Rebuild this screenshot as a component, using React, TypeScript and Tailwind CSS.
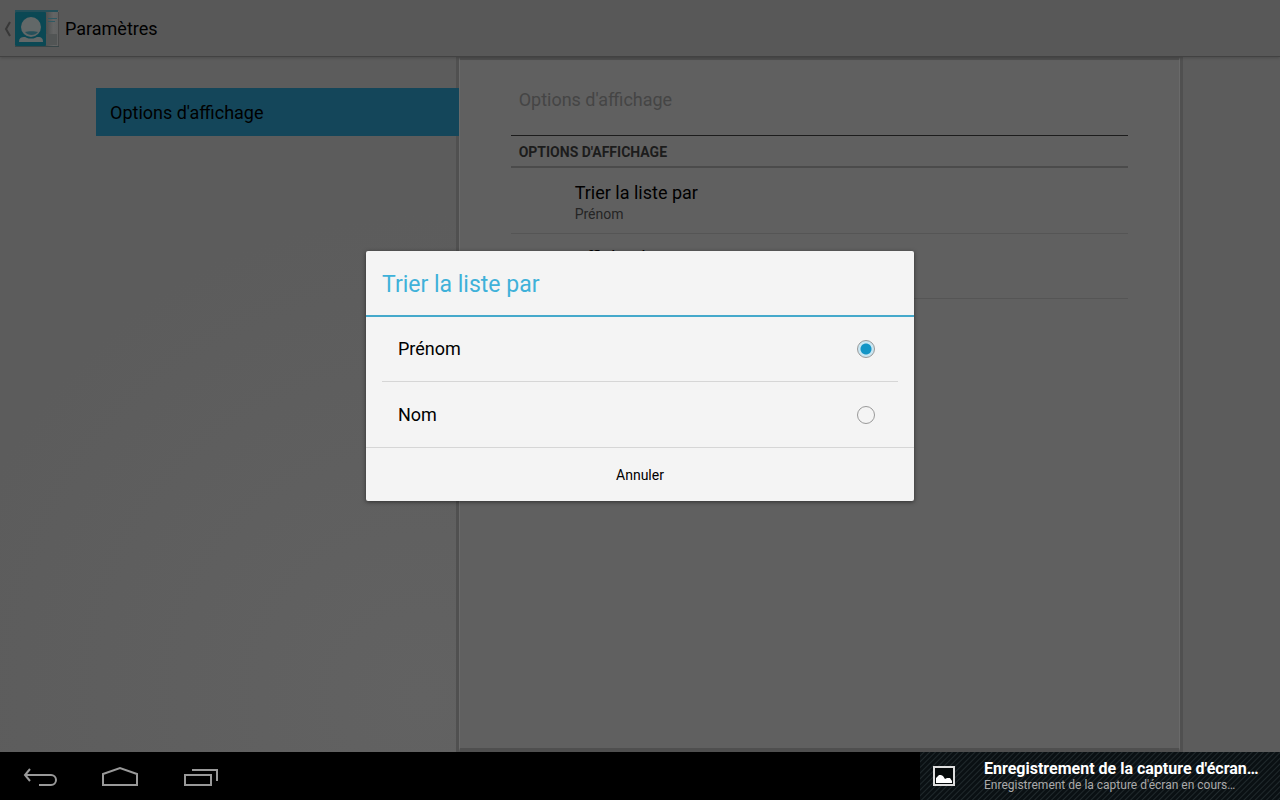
import React, { useState } from "react";

const preferences = [
  { title: "Trier la liste par", summary: "Prénom" },
  { title: "Afficher les contacts", summary: "Prénom en premier" },
];

const sortChoices = ["Prénom", "Nom"];

function ContactsIcon() {
  return (
    <svg className="h-10 w-11 shrink-0" viewBox="0 0 44 40" aria-hidden="true">
      <defs>
        <linearGradient id="page" x1="0" x2="1" y1="0" y2="0">
          <stop offset="0" stopColor="#484c4c" />
          <stop offset="0.6" stopColor="#646565" />
          <stop offset="1" stopColor="#606161" />
        </linearGradient>
      </defs>
      <rect x="30" y="2" width="14" height="36" fill="url(#page)" />
      <rect x="0" y="1" width="43" height="2" fill="#244f59" />
      <rect x="33" y="9" width="9" height="1" fill="#2f5963" />
      <rect x="33" y="12" width="7" height="1" fill="#2f5963" />
      <rect x="31" y="25" width="11" height="11" fill="#525555" />
      <rect x="43" y="3" width="1" height="34" fill="#4a4b4b" />
      <rect x="0" y="3" width="31" height="34" rx="1" fill="#0b4854" />
      <rect x="0" y="37" width="44" height="1" fill="#384547" />
      <path d="M4 33c0-4 2-5 6-5h13c4 0 5 2 5 5z" fill="#626868" />
      <circle cx="16" cy="18" r="11.5" fill="#0b4854" />
      <circle cx="16" cy="18" r="10" fill="#626868" />
      <path d="M10 23c3-1 10-1 13 0-3 4-10 4-13 0z" fill="#26505a" />
    </svg>
  );
}

function Header() {
  return (
    <header className="z-10 flex h-[57px] shrink-0 items-center border-b border-[#424242] bg-[#585858] pt-[2px] shadow-[0_1px_3px_#00000030]">
      <button className="flex items-center gap-1 pl-1" aria-label="Retour">
        <svg className="h-4 w-[7px]" viewBox="0 0 7 16" fill="none" stroke="#383838" strokeWidth="2" aria-hidden="true">
          <path d="M6 1L2 8l4 7" />
        </svg>
        <ContactsIcon />
      </button>
      <h1 className="pl-[6px] text-lg text-black">Paramètres</h1>
    </header>
  );
}

function SettingsPanel() {
  return (
    <section className="mr-1 border-x border-t-[3px] border-b-4 border-x-[#6a6a6a] border-y-[#4f4f4f] bg-[#606060] px-[51px] shadow-[3px_0_0_#505050,-3px_0_0_#505050]">
      <h2 className="flex h-[76px] items-center border-b border-[#1c1c1c] px-2 pt-1 text-lg text-[#454545]">
        Options d'affichage
      </h2>
      <h3 className="flex h-8 items-center border-b-2 border-[#4b4b4b] px-2 pt-[2px] text-sm font-bold text-[#1c1c1c]">
        OPTIONS D'AFFICHAGE
      </h3>
      <ul className="pt-px">
        {preferences.map((item) => (
          <li key={item.title} className="h-[65px] border-b border-[#555]">
            <button className="flex h-full w-full flex-col justify-center pt-[2px] pl-16 text-left">
              <span className="text-lg leading-6 text-black">{item.title}</span>
              <span className="text-sm leading-[18px] text-[#252525]">{item.summary}</span>
            </button>
          </li>
        ))}
      </ul>
    </section>
  );
}

function SortDialog() {
  const [selected, setSelected] = useState("Prénom");

  return (
    <div className="absolute inset-0 z-20 flex items-center justify-center px-4">
      <div
        role="dialog"
        aria-labelledby="dialog-title"
        className="w-full max-w-[548px] rounded-xs bg-[#f4f4f4] shadow-[0_1px_4px_#00000080]"
      >
        <h2 id="dialog-title" className="flex h-[66px] items-center border-b-2 border-[#45a9cb] px-4 pt-1 text-[23px] text-[#3fb1d9]">
          Trier la liste par
        </h2>
        <div className="divide-y divide-[#d6d6d6] px-4">
          {sortChoices.map((choice) => (
            <label key={choice} className="flex h-[65px] items-center justify-between pr-[23px] pl-4 text-lg text-black">
              {choice}
              <input
                type="radio"
                name="sort"
                checked={selected === choice}
                onChange={() => setSelected(choice)}
                className="size-[18px] appearance-none rounded-full border border-[#999] checked:bg-[radial-gradient(circle,#1395c6_5px,#c9e6f2_6px)]"
              />
            </label>
          ))}
        </div>
        <button className="h-[54px] w-full border-t border-[#d6d6d6] text-sm text-black">Annuler</button>
      </div>
    </div>
  );
}

function SystemBar() {
  return (
    <footer className="z-10 flex h-12 shrink-0 justify-between bg-black">
      <div className="flex">
        <button className="flex w-20 items-center justify-center" aria-label="Précédent">
          <svg className="h-6 w-9" viewBox="0 0 36 24" fill="none" stroke="#999" strokeWidth="2" aria-hidden="true">
            <path d="M8 5L3 11l5 6M3 11h26a5 5 0 0 1 0 10H17" />
          </svg>
        </button>
        <button className="flex w-20 items-center justify-center" aria-label="Accueil">
          <svg className="h-6 w-9" viewBox="0 0 36 24" fill="none" stroke="#999" strokeWidth="2" aria-hidden="true">
            <path d="M1 21V10l17-6 17 6v11z" />
          </svg>
        </button>
        <button className="flex w-20 items-center justify-center" aria-label="Applications récentes">
          <svg className="h-6 w-9" viewBox="0 0 36 24" fill="none" stroke="#999" strokeWidth="2" aria-hidden="true">
            <path d="M3 11h26v10H3zM10 6h25v11" />
          </svg>
        </button>
      </div>
      <div className="flex w-[360px] items-center bg-[#0a1013] bg-[repeating-linear-gradient(135deg,#0a1013_0px,#0a1013_2px,#20292c_3px,#0a1013_4px)]">
        <svg className="mx-3 h-6 w-6 shrink-0" viewBox="0 0 24 24" aria-hidden="true">
          <rect x="2" y="3" width="20" height="18" fill="#05090a" stroke="#ddd" strokeWidth="2" />
          <path d="M4 19v-5l3-3h2l2 1 2 3 2-1h3l2 3v2z" fill="#fff" />
        </svg>
        <div className="min-w-0 pl-4">
          <p className="truncate text-base leading-[18px] font-bold text-white">Enregistrement de la capture d'écran…</p>
          <p className="truncate text-xs leading-[14px] text-[#aaa]">Enregistrement de la capture d'écran en cours…</p>
        </div>
      </div>
    </footer>
  );
}

export default function App() {
  return (
    <div className="flex h-screen flex-col overflow-hidden bg-black font-[Roboto,sans-serif]">
      <div className="relative flex min-h-0 flex-1 flex-col">
        <Header />
        <main className="grid flex-1 grid-cols-[1fr_2fr] bg-[radial-gradient(circle_at_33%_92%,#626262,#5c5c5c_45%)] px-24">
          <nav className="z-10 pt-[31px]">
            <a href="#display" className="flex h-12 items-center bg-[#14465a] px-[14px] pt-[2px] text-lg text-black">
              Options d'affichage
            </a>
          </nav>
          <SettingsPanel />
        </main>
        <SortDialog />
      </div>
      <SystemBar />
    </div>
  );
}
